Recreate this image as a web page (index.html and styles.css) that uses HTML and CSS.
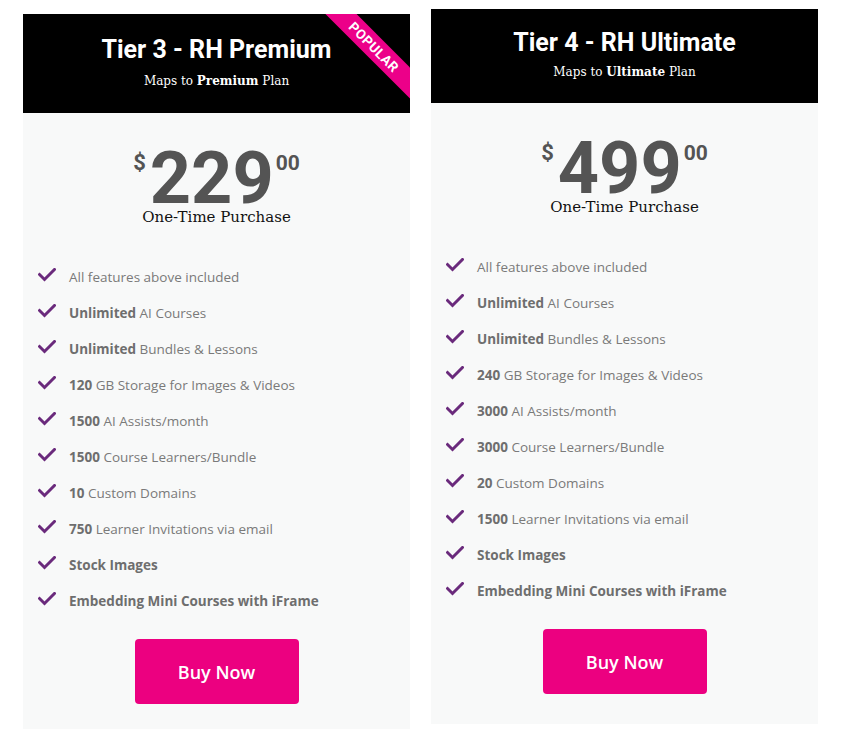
FILE: index.html
```html
<!DOCTYPE html>
<html lang="en">
<head>
    <meta charset="UTF-8">
    <meta name="viewport" content="width=device-width, initial-scale=1.0">
    <title>Pricing Tiers</title>
    <link rel="stylesheet" href="styles.css">
</head>
<body>
    <div class="pricing">
        <!-- Tier 3 -->
        <div class="card card-popular">
            <div class="card-header">
                <h2>Tier 3 - RH Premium</h2>
                <p class="subtitle">Maps to <b>Premium</b> Plan</p>
                <div class="ribbon"><span>POPULAR</span></div>
            </div>
            <div class="price">
                <span class="currency">$</span>
                <span class="amount">229</span>
                <span class="cents">00</span>
            </div>
            <p class="period">One-Time Purchase</p>
            <ul class="features">
                <li><svg viewBox="0 0 18 14"><path d="M1.5 6.5 L6.5 11.5 L16.5 1.5"/></svg><span>All features above included</span></li>
                <li><svg viewBox="0 0 18 14"><path d="M1.5 6.5 L6.5 11.5 L16.5 1.5"/></svg><span><b>Unlimited</b> AI Courses</span></li>
                <li><svg viewBox="0 0 18 14"><path d="M1.5 6.5 L6.5 11.5 L16.5 1.5"/></svg><span><b>Unlimited</b> Bundles &amp; Lessons</span></li>
                <li><svg viewBox="0 0 18 14"><path d="M1.5 6.5 L6.5 11.5 L16.5 1.5"/></svg><span><b>120</b> GB Storage for Images &amp; Videos</span></li>
                <li><svg viewBox="0 0 18 14"><path d="M1.5 6.5 L6.5 11.5 L16.5 1.5"/></svg><span><b>1500</b> AI Assists/month</span></li>
                <li><svg viewBox="0 0 18 14"><path d="M1.5 6.5 L6.5 11.5 L16.5 1.5"/></svg><span><b>1500</b> Course Learners/Bundle</span></li>
                <li><svg viewBox="0 0 18 14"><path d="M1.5 6.5 L6.5 11.5 L16.5 1.5"/></svg><span><b>10</b> Custom Domains</span></li>
                <li><svg viewBox="0 0 18 14"><path d="M1.5 6.5 L6.5 11.5 L16.5 1.5"/></svg><span><b>750</b> Learner Invitations via email</span></li>
                <li><svg viewBox="0 0 18 14"><path d="M1.5 6.5 L6.5 11.5 L16.5 1.5"/></svg><span><b>Stock Images</b></span></li>
                <li><svg viewBox="0 0 18 14"><path d="M1.5 6.5 L6.5 11.5 L16.5 1.5"/></svg><span><b>Embedding Mini Courses with iFrame</b></span></li>
            </ul>
            <button class="buy-button">Buy Now</button>
        </div>

        <!-- Tier 4 -->
        <div class="card card-ultimate">
            <div class="card-header">
                <h2>Tier 4 - RH Ultimate</h2>
                <p class="subtitle">Maps to <b>Ultimate</b> Plan</p>
            </div>
            <div class="price">
                <span class="currency">$</span>
                <span class="amount">499</span>
                <span class="cents">00</span>
            </div>
            <p class="period">One-Time Purchase</p>
            <ul class="features">
                <li><svg viewBox="0 0 18 14"><path d="M1.5 6.5 L6.5 11.5 L16.5 1.5"/></svg><span>All features above included</span></li>
                <li><svg viewBox="0 0 18 14"><path d="M1.5 6.5 L6.5 11.5 L16.5 1.5"/></svg><span><b>Unlimited</b> AI Courses</span></li>
                <li><svg viewBox="0 0 18 14"><path d="M1.5 6.5 L6.5 11.5 L16.5 1.5"/></svg><span><b>Unlimited</b> Bundles &amp; Lessons</span></li>
                <li><svg viewBox="0 0 18 14"><path d="M1.5 6.5 L6.5 11.5 L16.5 1.5"/></svg><span><b>240</b> GB Storage for Images &amp; Videos</span></li>
                <li><svg viewBox="0 0 18 14"><path d="M1.5 6.5 L6.5 11.5 L16.5 1.5"/></svg><span><b>3000</b> AI Assists/month</span></li>
                <li><svg viewBox="0 0 18 14"><path d="M1.5 6.5 L6.5 11.5 L16.5 1.5"/></svg><span><b>3000</b> Course Learners/Bundle</span></li>
                <li><svg viewBox="0 0 18 14"><path d="M1.5 6.5 L6.5 11.5 L16.5 1.5"/></svg><span><b>20</b> Custom Domains</span></li>
                <li><svg viewBox="0 0 18 14"><path d="M1.5 6.5 L6.5 11.5 L16.5 1.5"/></svg><span><b>1500</b> Learner Invitations via email</span></li>
                <li><svg viewBox="0 0 18 14"><path d="M1.5 6.5 L6.5 11.5 L16.5 1.5"/></svg><span><b>Stock Images</b></span></li>
                <li><svg viewBox="0 0 18 14"><path d="M1.5 6.5 L6.5 11.5 L16.5 1.5"/></svg><span><b>Embedding Mini Courses with iFrame</b></span></li>
            </ul>
            <button class="buy-button">Buy Now</button>
        </div>
    </div>
</body>
</html>
```

FILE: styles.css
```css
body {
    margin: 0;
    padding: 0;
    background-color: #fff;
    font-family: 'Roboto', sans-serif;
    overflow: hidden;
}

.pricing {
    display: flex;
    align-items: flex-start;
    gap: 21px;
    padding-left: 23px;
}

.card {
    width: 387px;
    height: 715px;
    background-color: #f8f9f9;
    display: flex;
    flex-direction: column;
    align-items: center;
    overflow: hidden;
}

.card-popular {
    margin-top: 14px;
}

.card-ultimate {
    margin-top: 9px;
}

.card-header {
    position: relative;
    width: 100%;
    height: 99px;
    background-color: #000;
    color: #fff;
    text-align: center;
    box-sizing: border-box;
    padding-top: 21px;
    overflow: hidden;
}

.card-ultimate .card-header {
    height: 94px;
    padding-top: 19px;
}

.card-header h2 {
    margin: 0;
    font-family: 'Roboto', sans-serif;
    font-weight: 700;
    font-size: 25px;
    line-height: 30px;
}

.subtitle {
    margin: 0;
    font-family: 'DejaVu Serif', serif;
    font-size: 12px;
    line-height: 16px;
    margin-top: 8px;
}

.card-ultimate .subtitle {
    margin-top: 6px;
}

.ribbon {
    position: absolute;
    top: 0;
    right: 0;
    width: 80px;
    height: 99px;
}

.ribbon span {
    position: absolute;
    top: 22px;
    left: -18px;
    width: 124px;
    height: 22px;
    background-color: #ec0089;
    color: #fff;
    font-family: 'Roboto', sans-serif;
    font-weight: 700;
    font-size: 13.5px;
    letter-spacing: 0.5px;
    line-height: 22px;
    text-align: center;
    transform: rotate(45deg);
}

.price {
    display: flex;
    align-items: flex-start;
    margin-top: 39px;
    color: #545454;
    font-family: 'Roboto', sans-serif;
    font-weight: 700;
}

.currency {
    font-size: 22px;
    line-height: 22px;
    margin-top: 0;
    margin-right: 4px;
}

.amount {
    font-size: 72px;
    line-height: 54px;
}

.cents {
    font-size: 21px;
    line-height: 22px;
    margin-top: 0;
    margin-left: 2px;
}

.period {
    margin: 1px 0 0;
    font-family: 'DejaVu Serif', serif;
    font-size: 15px;
    line-height: 20px;
    color: #111;
}

.features {
    list-style: none;
    margin: 32px 0 0;
    padding: 0 0 0 15px;
    align-self: stretch;
}

.features li {
    display: flex;
    align-items: center;
    height: 36px;
    font-family: 'Open Sans', sans-serif;
    font-size: 13.5px;
    color: #7a7a7a;
}

.features li svg {
    width: 18px;
    height: 14px;
    margin-right: 13px;
    margin-top: -5px;
    fill: none;
    stroke: #6a2a7c;
    stroke-width: 3;
    stroke-linecap: square;
}

.features b {
    color: #6e6e6e;
    font-weight: 700;
}

.buy-button {
    margin-top: 20px;
    width: 164px;
    height: 65px;
    background-color: #ec0080;
    color: #fff;
    border: none;
    border-radius: 4px;
    font-family: 'Open Sans', sans-serif;
    font-weight: 600;
    font-size: 18px;
    cursor: pointer;
}
```
